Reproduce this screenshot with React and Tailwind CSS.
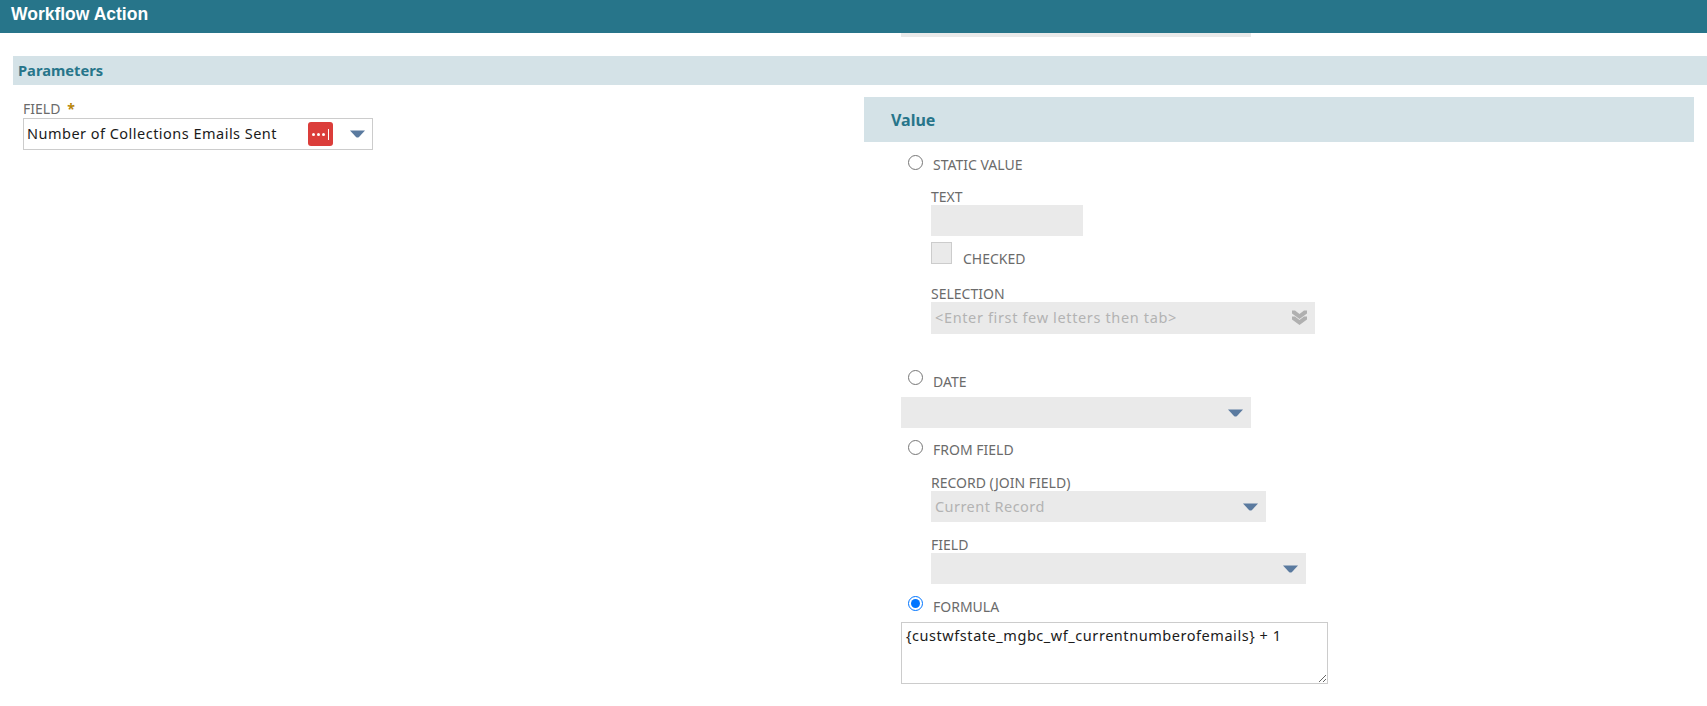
const Arrow = () => (
  <svg width="15" height="8" viewBox="0 0 15 8" className="shrink-0" aria-hidden="true">
    <path d="M0 0.5 H15 L9 7 Q7.5 8 6 7 Z" fill="#5a7a9f" />
  </svg>
);

const FieldLabel = ({ children }) => (
  <div className="h-[16px] text-[14px] leading-[16px] text-[#6b6b6b] uppercase">{children}</div>
);

const RadioRow = ({ label, checked, labelTop = 'mt-[2px]' }) => (
  <div className="flex h-[20px] pl-[7px]">
    <input type="radio" name="valueType" defaultChecked={checked} className="m-0 w-[15px] h-[15px] shrink-0" />
    <span className={`ml-[10px] ${labelTop} text-[14px] leading-[16px] text-[#6b6b6b] uppercase`}>{label}</span>
  </div>
);

const GraySelect = ({ className, children }) => (
  <div className={`flex items-center justify-between bg-[#eaeaea] pl-[4px] pr-[8px] ${className}`}>
    <span className="text-[14.5px] tracking-[0.45px] text-[#b3b3b3]">{children}</span>
    <Arrow />
  </div>
);

const App = () => {
  return (
    <div className="min-h-screen bg-white font-['Noto_Sans','Liberation_Sans',sans-serif] overflow-hidden">
      <header className="h-[33px] bg-[#27758a] pl-[11px] pt-[4px]">
        <h1 className="font-['Liberation_Sans',sans-serif] text-[17.5px] font-bold leading-[21px] text-white">Workflow Action</h1>
      </header>
      <div className="ml-[901px] w-[350px] h-[4px] bg-[#eaeaea]" />

      <div className="mt-[19px] ml-[13px] h-[29px] bg-[#d4e2e7] pl-[5px] flex items-center">
        <h2 className="text-[14.7px] font-bold text-[#27758a]">Parameters</h2>
      </div>

      <main className="flex">
        <section className="w-[864px] pl-[23px] pt-[16px]">
          <div className="flex items-start h-[17px] text-[14px] leading-[16px] text-[#6b6b6b]">
            FIELD <span className="ml-[7px] text-[#b8860b] font-bold">*</span>
          </div>
          <div className="w-[350px] h-[32px] border border-[#cccccc] flex items-center pl-[3px] pr-[7px]">
            <span className="text-[14.5px] tracking-[0.48px] text-[#1b1b1b] flex-1 whitespace-nowrap">Number of Collections Emails Sent</span>
            <span className="w-[25px] h-[24px] bg-[#db3d3a] rounded-[3px] flex items-center justify-center gap-[2px] mr-[17px]">
              <i className="w-[3px] h-[3px] rounded-full bg-white" />
              <i className="w-[3px] h-[3px] rounded-full bg-white" />
              <i className="w-[3px] h-[3px] rounded-full bg-white" />
              <i className="ml-[1px] w-[1px] h-[11px] bg-white" />
            </span>
            <Arrow />
          </div>
        </section>

        <section className="flex-1 mr-[13px] pt-[12px]">
          <div className="h-[45px] bg-[#d4e2e7] pl-[27px] flex items-center">
            <h2 className="text-[16px] font-bold text-[#27758a]">Value</h2>
          </div>

          <div className="pl-[37px] pt-[13px]">
            <RadioRow label="Static Value" />
            <div className="pl-[30px]">
              <div className="mt-[14px]"><FieldLabel>Text</FieldLabel></div>
              <div className="w-[152px] h-[31px] bg-[#eaeaea]" />
              <div className="mt-[6px] flex h-[22px]">
                <div className="w-[21px] h-[22px] bg-[#eaeaea] border border-[#cccccc]" />
                <span className="ml-[11px] mt-[9px] text-[14px] leading-[16px] text-[#6b6b6b]">CHECKED</span>
              </div>
              <div className="mt-[22px]"><FieldLabel>Selection</FieldLabel></div>
              <div className="w-[384px] h-[32px] bg-[#eaeaea] flex items-center justify-between pl-[4px] pr-[8px]">
                <span className="text-[14.5px] tracking-[0.64px] text-[#b3b3b3]">&lt;Enter first few letters then tab&gt;</span>
                <svg width="15" height="16" viewBox="0 0 15 16" aria-hidden="true">
                  <path d="M0 0.5 L3 0.5 L7.5 4 L12 0.5 L15 0.5 L15 3.5 L7.5 9 L0 3.5 Z M0 6.5 L3 6.5 L7.5 10 L12 6.5 L15 6.5 L15 9.5 L7.5 15 L0 9.5 Z" fill="#b0b0b0" />
                </svg>
              </div>
            </div>

            <div className="mt-[36px]"><RadioRow label="Date" labelTop="mt-[4px]" /></div>
            <GraySelect className="mt-[7px] w-[350px] h-[31px]" />

            <div className="mt-[12px]"><RadioRow label="From Field" /></div>
            <div className="pl-[30px]">
              <div className="mt-[15px]"><FieldLabel>Record (Join Field)</FieldLabel></div>
              <GraySelect className="w-[335px] h-[31px]">Current Record</GraySelect>
              <div className="mt-[15px]"><FieldLabel>Field</FieldLabel></div>
              <GraySelect className="w-[375px] h-[31px]" />
            </div>

            <div className="mt-[12px]"><RadioRow label="Formula" checked labelTop="mt-[3px]" /></div>
            <textarea
              className="mt-[6px] block w-[427px] h-[62px] border border-[#cccccc] px-[4px] py-[2px] text-[14.5px] tracking-[0.55px] leading-[20px] text-[#1b1b1b] outline-none"
              defaultValue="{custwfstate_mgbc_wf_currentnumberofemails} + 1"
            />
          </div>
        </section>
      </main>
    </div>
  );
};

export default App;
